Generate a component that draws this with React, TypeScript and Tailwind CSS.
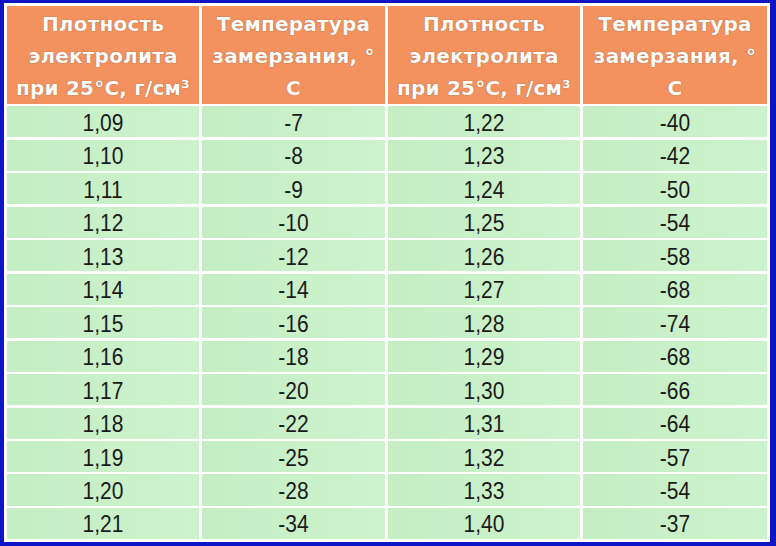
import React from "react";

const rows: [string, string, string, string][] = [
  ["1,09", "-7", "1,22", "-40"],
  ["1,10", "-8", "1,23", "-42"],
  ["1,11", "-9", "1,24", "-50"],
  ["1,12", "-10", "1,25", "-54"],
  ["1,13", "-12", "1,26", "-58"],
  ["1,14", "-14", "1,27", "-68"],
  ["1,15", "-16", "1,28", "-74"],
  ["1,16", "-18", "1,29", "-68"],
  ["1,17", "-20", "1,30", "-66"],
  ["1,18", "-22", "1,31", "-64"],
  ["1,19", "-25", "1,32", "-57"],
  ["1,20", "-28", "1,33", "-54"],
  ["1,21", "-34", "1,40", "-37"],
];

const headCls =
  "bg-[#f3925f] flex items-center justify-center text-center text-white font-bold text-[20px] leading-[32px] whitespace-nowrap tracking-[0.2px] [text-shadow:0_0_1px_rgba(90,40,20,0.7)] [font-family:'DejaVu_Sans',Verdana,sans-serif]";

const HeadDensity = () => (
  <div className={headCls}>
    <div className="pt-[2px]">
      Плотность
      <br />
      электролита
      <br />
      при 25°С, г/см³
    </div>
  </div>
);

const HeadTemp = () => (
  <div className={headCls}>
    <div className="pt-[2px]">
      Температура
      <br />
      замерзания, °
      <br />С
    </div>
  </div>
);

export default function App() {
  return (
    <div
      className="w-[776px] h-[546px] bg-[#0d14c6] pl-[4px] pr-[6px] pt-[3px] pb-[4px]"
      style={{ fontFamily: '"Liberation Sans", Arial, sans-serif' }}
    >
      <div className="h-full bg-white p-[3px]">
        <div className="h-full grid grid-cols-[192px_183px_192px_1fr] grid-rows-[98px_repeat(13,minmax(0,1fr))] gap-x-[3px] gap-y-[2.4px]">
          <HeadDensity />
          <HeadTemp />
          <HeadDensity />
          <HeadTemp />
          {rows.map((r, i) =>
            r.map((v, j) => (
              <div
                key={`${i}-${j}`}
                className="min-h-0 overflow-hidden bg-gradient-to-r from-[#c5eec5] to-[#cdf2cd] flex items-center justify-center text-[21px] leading-none text-[#1a1a1a]"
              >
                <span className="inline-block scale-y-110 pt-[1px]">{v}</span>
              </div>
            ))
          )}
        </div>
      </div>
    </div>
  );
}
